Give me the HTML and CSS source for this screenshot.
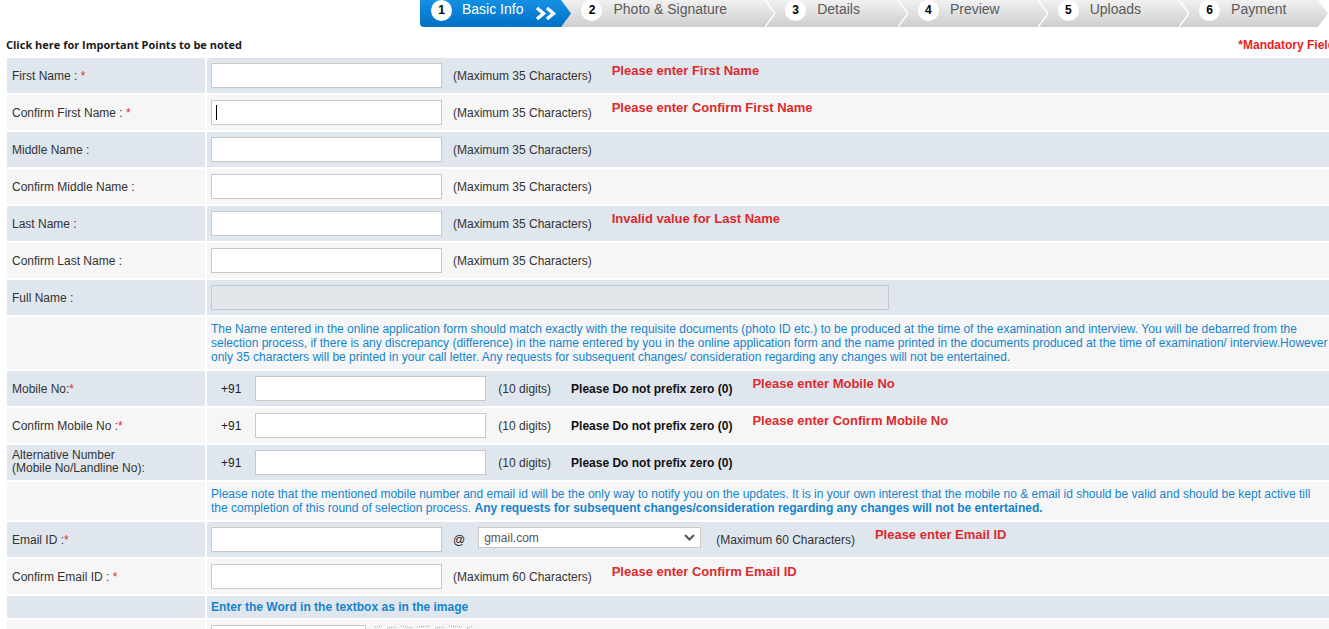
FILE: index.html
```html
<!DOCTYPE html>
<html lang="en">
<head>
<meta charset="utf-8">
<title>Basic Info</title>
<link rel="stylesheet" href="styles.css">
</head>
<body>
<div class="page">
  <nav class="stepper">
    <div class="step active">
      <span class="num">1</span><span class="slabel">Basic Info</span>
      <svg class="dbl" width="22" height="13" viewBox="0 0 22 13"><polyline points="2,1 8.5,6.5 2,12" fill="none" stroke="#fff" stroke-width="3.4"/><polyline points="12,1 18.5,6.5 12,12" fill="none" stroke="#fff" stroke-width="3.4"/></svg>
    </div>
    <svg class="sep tip-active" width="10" height="27" viewBox="0 0 10 27">
      <defs><linearGradient id="gb" x1="0" y1="0" x2="0" y2="1"><stop offset="0" stop-color="#1490e3"/><stop offset="1" stop-color="#0070c4"/></linearGradient></defs>
      <polygon points="0,0 10,13.5 0,27" fill="url(#gb)"/>
    </svg>
    <div class="step"><span class="num">2</span><span class="slabel">Photo &amp; Signature</span></div>
    <svg class="sep" width="10" height="27" viewBox="0 0 10 27"><polyline points="0,0 10,13.5 0,27" fill="none" stroke="#fff" stroke-width="1.4"/></svg>
    <div class="step"><span class="num">3</span><span class="slabel">Details</span></div>
    <svg class="sep" width="10" height="27" viewBox="0 0 10 27"><polyline points="0,0 10,13.5 0,27" fill="none" stroke="#fff" stroke-width="1.4"/></svg>
    <div class="step"><span class="num">4</span><span class="slabel">Preview</span></div>
    <svg class="sep" width="10" height="27" viewBox="0 0 10 27"><polyline points="0,0 10,13.5 0,27" fill="none" stroke="#fff" stroke-width="1.4"/></svg>
    <div class="step"><span class="num">5</span><span class="slabel">Uploads</span></div>
    <svg class="sep" width="10" height="27" viewBox="0 0 10 27"><polyline points="0,0 10,13.5 0,27" fill="none" stroke="#fff" stroke-width="1.4"/></svg>
    <div class="step last"><span class="num">6</span><span class="slabel">Payment</span></div>
    <svg class="endtip" width="10" height="27" viewBox="0 0 10 27">
      <defs><linearGradient id="gg" x1="0" y1="0" x2="0" y2="1"><stop offset="0" stop-color="#f1f1f1"/><stop offset="1" stop-color="#cecece"/></linearGradient></defs>
      <polygon points="0,0 10,13.5 0,27" fill="url(#gg)"/>
    </svg>
  </nav>

  <div class="topbar">
    <span class="important">Click here for Important Points to be noted</span>
    <span class="mandatory">*Mandatory Field</span>
  </div>

  <div class="form">
    <div class="row">
      <div class="lbl">First Name :&nbsp;<span class="req">*</span></div>
      <div class="val"><input class="inp" type="text"><span class="hint">(Maximum 35 Characters)</span><span class="err">Please enter First Name</span></div>
    </div>
    <div class="row">
      <div class="lbl">Confirm First Name :&nbsp;<span class="req">*</span></div>
      <div class="val"><span class="caret-wrap"><input class="inp" type="text"></span><span class="hint">(Maximum 35 Characters)</span><span class="err">Please enter Confirm First Name</span></div>
    </div>
    <div class="row">
      <div class="lbl">Middle Name :</div>
      <div class="val"><input class="inp" type="text"><span class="hint">(Maximum 35 Characters)</span></div>
    </div>
    <div class="row">
      <div class="lbl">Confirm Middle Name :</div>
      <div class="val"><input class="inp" type="text"><span class="hint">(Maximum 35 Characters)</span></div>
    </div>
    <div class="row">
      <div class="lbl">Last Name :</div>
      <div class="val"><input class="inp" type="text"><span class="hint">(Maximum 35 Characters)</span><span class="err">Invalid value for Last Name</span></div>
    </div>
    <div class="row">
      <div class="lbl">Confirm Last Name :</div>
      <div class="val"><input class="inp" type="text"><span class="hint">(Maximum 35 Characters)</span></div>
    </div>
    <div class="row">
      <div class="lbl">Full Name :</div>
      <div class="val"><input class="inp full" type="text" disabled></div>
    </div>
    <div class="row">
      <div class="lbl"></div>
      <div class="val block"><p class="note">The Name entered in the online application form should match exactly with the requisite documents (photo ID etc.) to be produced at the time of the examination and interview. You will be debarred from the<br>selection process, if there is any discrepancy (difference) in the name entered by you in the online application form and the name printed in the documents produced at the time of examination/ interview.However<br>only 35 characters will be printed in your call letter. Any requests for subsequent changes/ consideration regarding any changes will not be entertained.</p></div>
    </div>
    <div class="row">
      <div class="lbl">Mobile No:<span class="req">*</span></div>
      <div class="val"><span class="cc">+91</span><input class="inp" type="text"><span class="hint h12">(10 digits)</span><span class="warn">Please Do not prefix zero (0)</span><span class="err">Please enter Mobile No</span></div>
    </div>
    <div class="row">
      <div class="lbl">Confirm Mobile No :<span class="req">*</span></div>
      <div class="val"><span class="cc">+91</span><input class="inp" type="text"><span class="hint h12">(10 digits)</span><span class="warn">Please Do not prefix zero (0)</span><span class="err">Please enter Confirm Mobile No</span></div>
    </div>
    <div class="row">
      <div class="lbl two">Alternative Number<br>(Mobile No/Landline No):</div>
      <div class="val"><span class="cc">+91</span><input class="inp" type="text"><span class="hint h12">(10 digits)</span><span class="warn">Please Do not prefix zero (0)</span></div>
    </div>
    <div class="row">
      <div class="lbl"></div>
      <div class="val block"><p class="note">Please note that the mentioned mobile number and email id will be the only way to notify you on the updates. It is in your own interest that the mobile no &amp; email id should be valid and should be kept active till<br>the completion of this round of selection process. <b>Any requests for subsequent changes/consideration regarding any changes will not be entertained.</b></p></div>
    </div>
    <div class="row">
      <div class="lbl">Email ID :<span class="req">*</span></div>
      <div class="val"><input class="inp" type="text"><span class="at">@</span>
        <div class="select"><span>gmail.com</span><svg width="11" height="7" viewBox="0 0 11 7"><polyline points="1,1 5.5,5.5 10,1" fill="none" stroke="#555" stroke-width="2"/></svg></div>
        <span class="hint h15">(Maximum 60 Characters)</span><span class="err">Please enter Email ID</span></div>
    </div>
    <div class="row">
      <div class="lbl">Confirm Email ID :&nbsp;<span class="req">*</span></div>
      <div class="val"><input class="inp" type="text"><span class="hint">(Maximum 60 Characters)</span><span class="err">Please enter Confirm Email ID</span></div>
    </div>
    <div class="row">
      <div class="lbl"></div>
      <div class="val slim"><p class="note strong">Enter the Word in the textbox as in the image</p></div>
    </div>
    <div class="row">
      <div class="lbl"></div>
      <div class="val top"><input class="inp captcha" type="text">
        <svg class="cimg" width="110" height="30" viewBox="0 0 110 30"><path d="M2 2 L10 1 M14 3 L24 2 M28 1 L40 3 M44 2 L58 1 M62 3 L72 2 M76 1 L90 2 M94 3 L100 1" stroke="#9aa" stroke-width="1" fill="none" stroke-dasharray="1 1"/></svg>
      </div>
    </div>
  </div>
</div>
</body>
</html>
```

FILE: styles.css
```css
html, body {
  margin: 0;
  padding: 0;
  overflow: hidden;
  background: #fff;
}
body {
  font-family: "Liberation Sans", Arial, sans-serif;
  font-size: 12px;
  color: #333;
}
.page {
  width: 1336px;
}

/* stepper */
.stepper {
  display: flex;
  height: 27px;
  margin-left: 420px;
}
.step {
  display: flex;
  align-items: center;
  flex: none;
  height: 27px;
  box-sizing: border-box;
  padding: 0 38px 7px 10px;
  background: linear-gradient(#f1f1f1, #cecece);
  font-size: 14px;
  color: #5a5a5a;
  white-space: nowrap;
}
.step .slabel {
  position: relative;
  top: -1px;
}
.step .num {
  width: 21px;
  height: 21px;
  border-radius: 50%;
  background: #fff;
  display: flex;
  align-items: center;
  justify-content: center;
  font-weight: bold;
  font-size: 12px;
  color: #000;
  margin-right: 11px;
  flex: none;
}
.step.active {
  background: linear-gradient(#1490e3, #0070c4);
  color: #fff;
  padding: 0 4px 7px 11px;
  border-bottom-left-radius: 4px;
}
.step.active .num {
  margin-right: 10px;
}
.step.last {
  padding-right: 32px;
}
.dbl {
  margin-left: 12px;
  margin-top: 7px;
  flex: none;
}
.sep {
  display: block;
  flex: none;
  background: linear-gradient(#f1f1f1, #cecece);
}
.endtip {
  display: block;
  flex: none;
}

/* top bar */
.topbar {
  display: flex;
  justify-content: space-between;
  align-items: center;
  height: 31px;
  box-sizing: border-box;
  padding: 4px 1px 0 6px;
}
.important {
  font-family: "Open Sans", "Liberation Sans", sans-serif;
  font-weight: bold;
  font-size: 11px;
  color: #1a1a1a;
}
.mandatory {
  color: #ec1c24;
  font-weight: bold;
  font-size: 12px;
}

/* form */
.form {
  margin-left: 7px;
  display: flex;
  flex-direction: column;
  gap: 2px;
}
.row {
  display: grid;
  grid-template-columns: 198px 1fr;
  column-gap: 2px;
}
.row > div {
  background: #dfe6ee;
}
.row:nth-child(even) > div {
  background: #f6f6f6;
}
.lbl {
  display: flex;
  align-items: center;
  padding-left: 5px;
  padding-top: 1px;
  color: #333;
  white-space: nowrap;
}
.lbl.two {
  display: block;
  align-self: stretch;
  padding-top: 4px;
  line-height: 13px;
  box-sizing: border-box;
}
.req {
  color: #e3262c;
}
.val {
  display: flex;
  align-items: center;
  padding: 5px 4px;
  min-height: 25px;
}
.val.block {
  display: block;
}
.val.slim {
  display: block;
  padding: 4px 4px;
  min-height: 0;
}
.val.top {
  align-items: flex-start;
}

.inp {
  width: 231px;
  height: 25px;
  box-sizing: border-box;
  border: 1px solid #c8c8c8;
  background: #fff;
  margin: 0;
  padding: 0 4px;
  flex: none;
  font-family: inherit;
  font-size: 12px;
  outline: none;
}
.inp.full {
  width: 678px;
  background: #e2e7eb;
  border-color: #c4c9cc;
}
.inp.captcha {
  width: 155px;
}
.cimg {
  margin-left: 7px;
  flex: none;
}
.caret-wrap {
  position: relative;
  display: flex;
  flex: none;
}
.caret-wrap::after {
  content: "";
  position: absolute;
  left: 5px;
  top: 5px;
  width: 1px;
  height: 15px;
  background: #000;
}

.hint {
  margin-left: 11px;
  color: #333;
  white-space: nowrap;
}
.hint.h12 {
  margin-left: 12px;
}
.hint.h15 {
  margin-left: 15px;
}
.err {
  align-self: flex-start;
  margin-left: 20px;
  color: #dc2a2e;
  font-weight: bold;
  font-size: 13px;
  line-height: 15px;
  white-space: nowrap;
}
.cc {
  margin-left: 10px;
  margin-right: 14px;
  color: #222;
}
.warn {
  margin-left: 20px;
  font-weight: bold;
  color: #111;
  white-space: nowrap;
}
.at {
  margin-left: 11px;
  color: #222;
}
.select {
  margin-left: 13px;
  align-self: flex-start;
  width: 223px;
  height: 21px;
  box-sizing: border-box;
  border: 1px solid #c8c8c8;
  background: #fff;
  display: flex;
  align-items: center;
  justify-content: space-between;
  padding: 0 5px 0 5px;
  color: #555;
  flex: none;
}
.note {
  margin: 0;
  color: #1484cc;
  line-height: 14px;
  white-space: nowrap;
}
.note.strong,
.note b {
  font-weight: bold;
}
```
